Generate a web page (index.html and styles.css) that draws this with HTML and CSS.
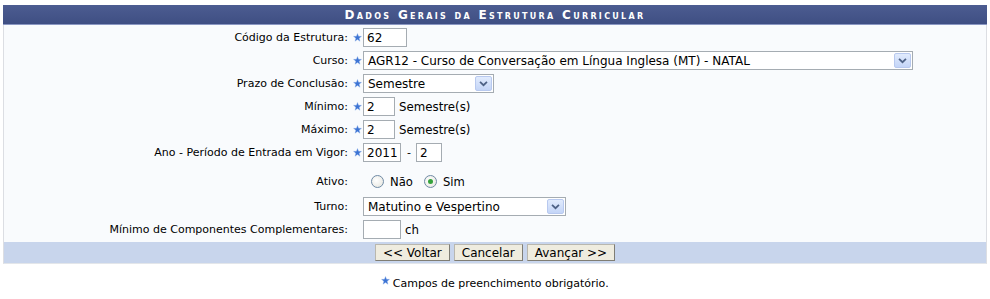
FILE: index.html
```html
<!DOCTYPE html>
<html lang="pt-BR">
<head>
  <meta charset="UTF-8" />
  <title>Dados Gerais da Estrutura Curricular</title>
  <link rel="stylesheet" href="styles.css">
</head>
<body>
  <form class="formulario">
    <div class="caption">Dados Gerais da Estrutura Curricular</div>
    <div class="corpo">
      <div class="linha">
        <label class="rotulo">Código da Estrutura:</label>
        <div class="campo">
          <svg class="estrela" viewBox="0 0 10 10"><path d="M5 0.5 L6.2 3.6 L9.5 3.7 L6.9 5.8 L7.8 9.2 L5 7.3 L2.2 9.2 L3.1 5.8 L0.5 3.7 L3.8 3.6 Z"/></svg>
          <input class="entrada w44" type="text" value="62">
        </div>
      </div>
      <div class="linha">
        <label class="rotulo">Curso:</label>
        <div class="campo">
          <svg class="estrela" viewBox="0 0 10 10"><path d="M5 0.5 L6.2 3.6 L9.5 3.7 L6.9 5.8 L7.8 9.2 L5 7.3 L2.2 9.2 L3.1 5.8 L0.5 3.7 L3.8 3.6 Z"/></svg>
          <div class="selecao w550">
            <span class="valor">AGR12 - Curso de Conversação em Língua Inglesa (MT) - NATAL</span>
            <span class="seta"><svg viewBox="0 0 17 15"><path d="M4.5 5.5 L8.5 9.5 L12.5 5.5" /></svg></span>
          </div>
        </div>
      </div>
      <div class="linha">
        <label class="rotulo">Prazo de Conclusão:</label>
        <div class="campo">
          <svg class="estrela" viewBox="0 0 10 10"><path d="M5 0.5 L6.2 3.6 L9.5 3.7 L6.9 5.8 L7.8 9.2 L5 7.3 L2.2 9.2 L3.1 5.8 L0.5 3.7 L3.8 3.6 Z"/></svg>
          <div class="selecao w131">
            <span class="valor">Semestre</span>
            <span class="seta"><svg viewBox="0 0 17 15"><path d="M4.5 5.5 L8.5 9.5 L12.5 5.5" /></svg></span>
          </div>
        </div>
      </div>
      <div class="linha">
        <label class="rotulo">Mínimo:</label>
        <div class="campo">
          <svg class="estrela" viewBox="0 0 10 10"><path d="M5 0.5 L6.2 3.6 L9.5 3.7 L6.9 5.8 L7.8 9.2 L5 7.3 L2.2 9.2 L3.1 5.8 L0.5 3.7 L3.8 3.6 Z"/></svg>
          <input class="entrada w32" type="text" value="2">
          <span class="sufixo">Semestre(s)</span>
        </div>
      </div>
      <div class="linha">
        <label class="rotulo">Máximo:</label>
        <div class="campo">
          <svg class="estrela" viewBox="0 0 10 10"><path d="M5 0.5 L6.2 3.6 L9.5 3.7 L6.9 5.8 L7.8 9.2 L5 7.3 L2.2 9.2 L3.1 5.8 L0.5 3.7 L3.8 3.6 Z"/></svg>
          <input class="entrada w32" type="text" value="2">
          <span class="sufixo">Semestre(s)</span>
        </div>
      </div>
      <div class="linha">
        <label class="rotulo">Ano - Período de Entrada em Vigor:</label>
        <div class="campo">
          <svg class="estrela" viewBox="0 0 10 10"><path d="M5 0.5 L6.2 3.6 L9.5 3.7 L6.9 5.8 L7.8 9.2 L5 7.3 L2.2 9.2 L3.1 5.8 L0.5 3.7 L3.8 3.6 Z"/></svg>
          <input class="entrada w38" type="text" value="2011">
          <span class="traco">-</span>
          <input class="entrada w26" type="text" value="2">
        </div>
      </div>
      <div class="linha alta">
        <label class="rotulo">Ativo:</label>
        <div class="campo sem-estrela">
          <span class="radio"></span><span class="opcao">Não</span>
          <span class="radio marcado"></span><span class="opcao">Sim</span>
        </div>
      </div>
      <div class="linha">
        <label class="rotulo">Turno:</label>
        <div class="campo sem-estrela">
          <div class="selecao w203">
            <span class="valor">Matutino e Vespertino</span>
            <span class="seta"><svg viewBox="0 0 17 15"><path d="M4.5 5.5 L8.5 9.5 L12.5 5.5" /></svg></span>
          </div>
        </div>
      </div>
      <div class="linha">
        <label class="rotulo">Mínimo de Componentes Complementares:</label>
        <div class="campo sem-estrela">
          <input class="entrada w38" type="text" value="">
          <span class="sufixo">ch</span>
        </div>
      </div>
    </div>
    <div class="rodape">
      <button type="button">&lt;&lt; Voltar</button>
      <button type="button">Cancelar</button>
      <button type="button">Avançar &gt;&gt;</button>
    </div>
  </form>

  <p class="obrigatorio">
    <svg class="estrela" viewBox="0 0 10 10"><path d="M5 0.5 L6.2 3.6 L9.5 3.7 L6.9 5.8 L7.8 9.2 L5 7.3 L2.2 9.2 L3.1 5.8 L0.5 3.7 L3.8 3.6 Z"/></svg>
    Campos de preenchimento obrigatório.
  </p>
</body>
</html>
```

FILE: styles.css
```css
* {
  box-sizing: border-box;
}

body {
  margin: 0;
  background: #fff;
  font-family: "DejaVu Sans", Verdana, sans-serif;
  font-size: 11px;
  color: #000;
}

.formulario {
  margin: 5px 3px 0 3px;
  width: 984px;
}

.caption {
  height: 20px;
  line-height: 20px;
  background: linear-gradient(#4c5c91, #3f4f83);
  border-bottom: 1px solid #8a97c2;
  color: #fff;
  font-weight: bold;
  font-variant: small-caps;
  letter-spacing: 2.3px;
  text-align: center;
  font-size: 12px;
}

.corpo {
  background: #f9fbfd;
  border-left: 1px solid #dcdee3;
  border-right: 1px solid #dcdee3;
  padding: 1px 0 1px 0;
}

.linha {
  display: flex;
  align-items: center;
  height: 23px;
}

.linha.alta {
  height: 31px;
  padding-top: 4px;
}

.rotulo {
  width: 344px;
  text-align: right;
  padding-right: 0;
}

.campo {
  display: flex;
  align-items: center;
}

.campo.sem-estrela {
  padding-left: 15px;
}

.estrela {
  width: 9px;
  height: 9px;
  fill: #3b73d4;
  stroke: #9bb8ea;
  stroke-width: 0.4;
  margin: 0 1px 0 5px;
}

.entrada {
  height: 19px;
  border: 1px solid #a5acb2;
  background: #fff;
  font: inherit;
  font-size: 12px;
  padding: 0 3px;
  color: #000;
}

.w26 { width: 26px; }
.w32 { width: 32px; }
.w38 { width: 38px; }
.w44 { width: 44px; }

.sufixo {
  margin-left: 4px;
  font-size: 11.8px;
}

.traco {
  margin: 0 5px 0 6px;
}

.selecao {
  height: 19px;
  border: 1px solid #a5acb2;
  background: #fff;
  display: flex;
  align-items: center;
  justify-content: space-between;
  padding: 0 1px 0 4px;
  font-size: 12px;
}

.w131 { width: 131px; }
.w203 { width: 203px; }
.w550 { width: 550px; }

.seta {
  width: 17px;
  height: 15px;
  background: linear-gradient(#e1ebfd, #c4d5f7);
  border: 1px solid #b8c9ef;
  border-radius: 2px;
  display: flex;
}

.seta svg {
  width: 15px;
  height: 13px;
  fill: none;
  stroke: #4d6185;
  stroke-width: 2;
}

.radio {
  width: 13px;
  height: 13px;
  border: 1px solid #6f8aa5;
  border-radius: 50%;
  background: radial-gradient(circle at 40% 40%, #fff, #e3e3dc);
  margin: 0 6px 0 8px;
  display: flex;
  align-items: center;
  justify-content: center;
}

.radio.marcado::after {
  content: "";
  width: 5px;
  height: 5px;
  border-radius: 50%;
  background: #35a23c;
}

.opcao {
  font-size: 11.6px;
}

.opcao + .radio {
  margin-left: 11px;
}

.rodape {
  background: #c8d5ec;
  height: 22px;
  display: flex;
  justify-content: center;
  align-items: center;
  gap: 4px;
  border-left: 1px solid #dcdee3;
  border-right: 1px solid #dcdee3;
  border-bottom: 1px solid #e3e6ea;
}

.rodape button {
  font: inherit;
  font-size: 12px;
  height: 17px;
  padding: 0 7px;
  background: #efecdf;
  border: 1px solid #8b8b8b;
  border-color: #b9b7ae #7f7d74 #7f7d74 #b9b7ae;
  color: #000;
}

.obrigatorio {
  text-align: center;
  margin: 12px 0 0 0;
  font-size: 11px;
}

.obrigatorio .estrela {
  vertical-align: 2px;
  margin: 0 -1px 0 0;
}
```
